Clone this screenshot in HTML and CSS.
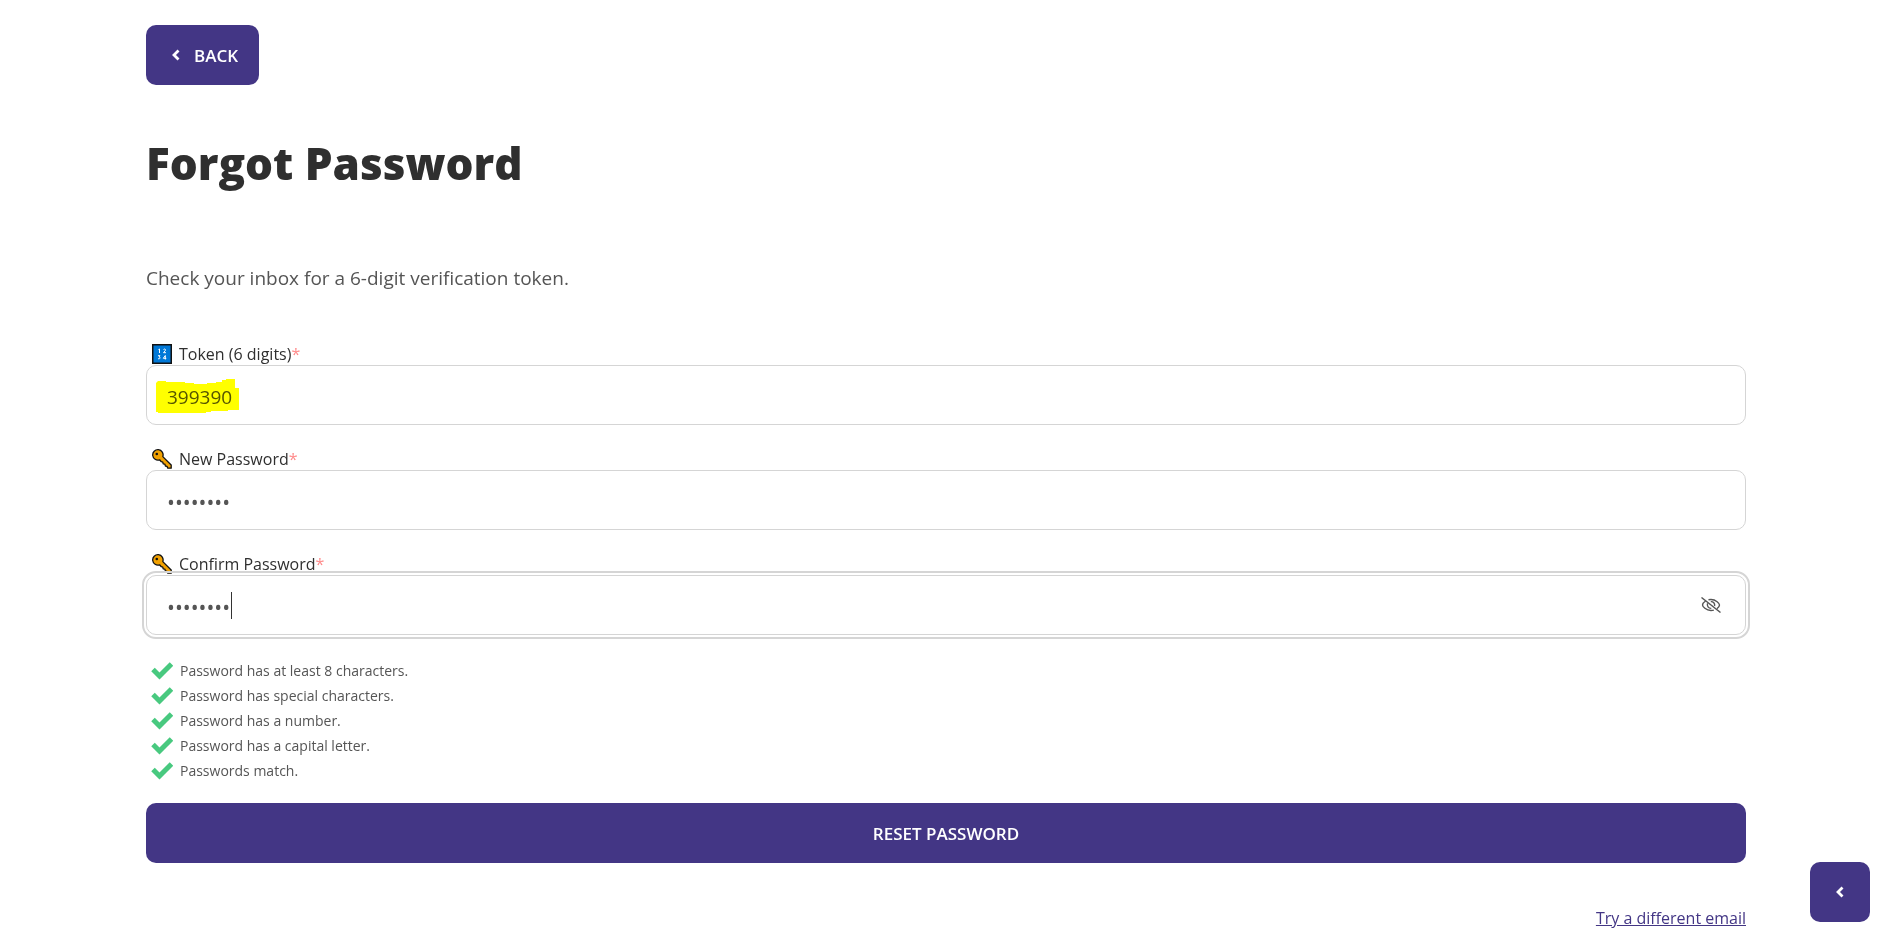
FILE: index.html
```html
<!DOCTYPE html>
<html lang="en">
<head>
<meta charset="utf-8">
<meta name="viewport" content="width=device-width, initial-scale=1">
<title>Forgot Password</title>
<link rel="stylesheet" href="styles.css">
</head>
<body>
<svg class="sprite" aria-hidden="true">
  <symbol id="icon-chevron" viewBox="0 0 8 12"><path d="M6.500 1.500 2 6l4.500 4.500" fill="none" stroke="currentColor" stroke-width="2.800"/></symbol>
  <symbol id="icon-key" viewBox="0 0 20 20">
    <path d="M10.800 7.600 19.200 16v3.200h-3.400l-.8-1.900-1.600-.3-.5-1.800-1.700-.3-.4-1.800-1.500-.4L7.600 10.800A5.200 5.200 0 1 1 10.800 7.600z" fill="#f2a100" stroke="#111" stroke-width="1.300" stroke-linejoin="round"/>
    <circle cx="4.800" cy="5" r="1.300" fill="#111"/>
  </symbol>
  <symbol id="icon-check" viewBox="0 0 22 18"><path d="M2 7.500 8.500 14 20.500 2" fill="none" stroke="#48c97f" stroke-width="5"/></symbol>
</svg>

<main class="page">
  <button class="btn btn-back" type="button"><svg class="chevron"><use href="#icon-chevron"/></svg>BACK</button>
  <h1 class="title">Forgot Password</h1>
  <p class="intro">Check your inbox for a 6-digit verification token.</p>

  <form class="form">
    <div class="field">
      <label class="label" for="token">
        <svg class="label-icon" viewBox="0 0 20 20" aria-hidden="true">
          <rect x=".75" y=".75" width="18.500" height="18.500" fill="#0078d7" stroke="#111" stroke-width="1.500"/>
          <path d="M6.500 5.500 7.500 5v4M11.500 5.500c.5-.8 2.300-.6 2 .7L11.500 8.700h2.500M6 11.700h2L7 13c1.800 0 1.300 2.500-1 1.700M13.300 15.500v-4l-2 2.800h3" fill="none" stroke="#fff" stroke-width="1"/>
        </svg>
        <span>Token (6 digits)<span class="required">*</span></span>
      </label>
      <div class="control">
        <input class="input" id="token" type="text" inputmode="numeric" value="399390">
        <svg class="marker" viewBox="0 0 83 35" aria-hidden="true"><path d="M0 4l2-2h8v1h19v1h9v1h13V4h9V3h6V1h4V0h9v9h4v22H72v1H55v1h-5v1H2v-1H0z" fill="#ff0"/></svg>
      </div>
    </div>
    <div class="field">
      <label class="label" for="new-password">
        <svg class="label-icon" aria-hidden="true"><use href="#icon-key"/></svg>
        <span>New Password<span class="required">*</span></span>
      </label>
      <div class="control">
        <input class="input input-password" id="new-password" type="password" value="Secret1!">
      </div>
    </div>
    <div class="field">
      <label class="label" for="confirm-password">
        <svg class="label-icon" aria-hidden="true"><use href="#icon-key"/></svg>
        <span>Confirm Password<span class="required">*</span></span>
      </label>
      <div class="control">
        <input class="input input-password input-active" id="confirm-password" type="password" value="Secret1!">
        <span class="caret"></span>
        <button class="toggle" type="button" aria-label="Show password">
          <svg class="toggle-icon" viewBox="0 0 20 16" fill="none" stroke="#555" stroke-width="1.400">
            <path d="M.5.500 19.500 15.500"/>
            <path d="M4.600 4C2.300 5.500 1.500 7.300 1.500 8c0 1.500 3.500 5.500 8.500 5.500 1 0 2-.1 2.800-.4M7.500 2.800C8.300 2.600 9.200 2.500 10 2.500c5 0 8.500 4 8.500 5.500 0 .8-.9 2.400-2.600 3.700"/>
            <path d="M6.600 6.300C5.600 9 7.500 11.500 10.300 11.400M9.800 4.600c2.500-.2 4.300 2 3.800 4.400"/>
          </svg>
        </button>
      </div>
    </div>

    <ul class="checks">
      <li class="check"><svg class="check-icon"><use href="#icon-check"/></svg>Password has at least 8 characters.</li>
      <li class="check"><svg class="check-icon"><use href="#icon-check"/></svg>Password has special characters.</li>
      <li class="check"><svg class="check-icon"><use href="#icon-check"/></svg>Password has a number.</li>
      <li class="check"><svg class="check-icon"><use href="#icon-check"/></svg>Password has a capital letter.</li>
      <li class="check"><svg class="check-icon"><use href="#icon-check"/></svg>Passwords match.</li>
    </ul>
    <button class="btn btn-submit" type="button">RESET PASSWORD</button>
  </form>
  <a class="alt-link" href="#">Try a different email</a>
</main>
<button class="btn btn-float" type="button" aria-label="Open panel"><svg class="chevron"><use href="#icon-chevron"/></svg></button>
</body>
</html>
```
FILE: styles.css
```css
* { box-sizing: border-box; }

body {
  margin: 0;
  background: #fff;
  color: #555;
  font-family: "Segoe UI", "Open Sans", "Noto Sans", sans-serif;
  font-size: 16px;
}

.sprite { position: absolute; width: 0; height: 0; }

.page {
  display: flex;
  flex-direction: column;
  align-items: flex-start;
  max-width: 1640px;
  margin: 0 auto;
  padding: 25px 20px 8px;
}

.btn {
  display: flex;
  align-items: center;
  justify-content: center;
  height: 60px;
  border: 0;
  border-radius: 10px;
  background: #433685;
  color: #fff;
  font-family: inherit;
  font-size: 17px;
  font-weight: 600;
  cursor: pointer;
}

.btn-back { gap: 14px; padding: 0 21px 0 26px; }
.chevron { width: 8px; height: 12px; }

.title {
  margin: 48px 0 0;
  color: #2f2f2f;
  font-size: 44px;
  font-weight: 800;
  line-height: 60px;
}

.intro {
  margin: 70px 0 0;
  font-size: 19px;
  line-height: 30px;
}

.form { width: 100%; margin-top: 47px; }
.field { margin-bottom: 20px; }

.label {
  display: flex;
  align-items: center;
  gap: 7px;
  height: 25px;
  padding: 3px 0 0 6px;
  color: #2f2f2f;
  font-size: 16px;
  line-height: 22px;
}

.label-icon { width: 20px; height: 20px; }
.required { color: #ff8a8a; }
.control { position: relative; }

.input {
  display: block;
  width: 100%;
  height: 60px;
  padding: 4px 20px 0;
  border: 1px solid #d5d5d5;
  border-radius: 10px;
  background: #fff;
  color: #555;
  font-family: inherit;
  font-size: 19px;
}

.input-password { font-size: 21px; }
.input-active { outline: 2px solid #d5d5d5; outline-offset: 2px; }

.marker {
  position: absolute;
  top: 14px;
  left: 10px;
  width: 83px;
  height: 35px;
  mix-blend-mode: multiply;
  pointer-events: none;
}

.caret {
  position: absolute;
  top: 17px;
  left: 85px;
  width: 1px;
  height: 27px;
  background: #333;
}

.toggle {
  position: absolute;
  top: 15px;
  right: 20px;
  display: grid;
  place-items: center;
  width: 30px;
  height: 30px;
  padding: 0;
  border: 0;
  background: none;
}

.toggle-icon { width: 20px; height: 16px; }

.checks { margin: 0; padding: 3px 0 20px 5px; list-style: none; }

.check {
  display: flex;
  align-items: center;
  gap: 7px;
  font-size: 14px;
  line-height: 25px;
}

.check-icon { width: 22px; height: 18px; }
.btn-submit { width: 100%; }

.alt-link {
  align-self: flex-end;
  margin-top: 40px;
  color: #433685;
  font-size: 16px;
  line-height: 30px;
}

.btn-float { position: fixed; right: 22px; bottom: 21px; width: 60px; padding: 0; }
```
